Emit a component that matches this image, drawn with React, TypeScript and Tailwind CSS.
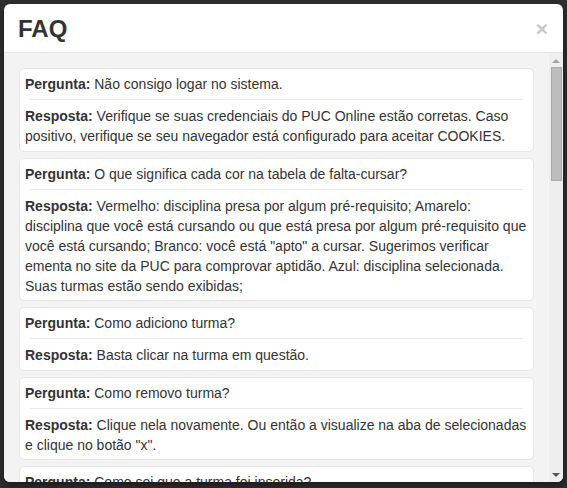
const faqs = [
  {
    q: 'Não consigo logar no sistema.',
    a: 'Verifique se suas credenciais do PUC Online estão corretas. Caso positivo, verifique se seu navegador está configurado para aceitar COOKIES.',
  },
  {
    q: 'O que significa cada cor na tabela de falta-cursar?',
    a: 'Vermelho: disciplina presa por algum pré-requisito; Amarelo: disciplina que você está cursando ou que está presa por algum pré-requisito que você está cursando; Branco: você está "apto" a cursar. Sugerimos verificar ementa no site da PUC para comprovar aptidão. Azul: disciplina selecionada. Suas turmas estão sendo exibidas;',
  },
  { q: 'Como adiciono turma?', a: 'Basta clicar na turma em questão.' },
  {
    q: 'Como removo turma?',
    a: 'Clique nela novamente. Ou então a visualize na aba de selecionadas e clique no botão "x".',
  },
  { q: 'Como sei que a turma foi inserida?', a: 'Ela aparecerá na grade de horários.' },
]

function FaqCard({ q, a }: { q: string; a: string }) {
  return (
    <div className="bg-white border border-[#e6e6e6] rounded-[5px] px-[5px] pt-[5px] pb-[4.5px]">
      <p className="leading-5">
        <b className="font-bold">Pergunta:</b> {q}
      </p>
      <hr className="mx-[5px] mt-[5px] mb-[6px] border-t border-[#eaeaea]" />
      <p className="leading-5">
        <b className="font-bold">Resposta:</b> {a}
      </p>
    </div>
  )
}

function Scrollbar() {
  return (
    <div className="w-[14px] bg-[#eeeeee] flex flex-col items-center">
      <div className="mt-[6px] w-0 h-0 border-x-[4px] border-x-transparent border-b-[4px] border-b-[#a3a3a3]" />
      <div className="mt-[4px] w-[11px] h-[114px] bg-[#bdbdbd] border border-[#a8a8a8]" />
      <div className="flex-1" />
      <div className="mb-[5px] w-0 h-0 border-x-[4px] border-x-transparent border-t-[4px] border-t-[#555]" />
    </div>
  )
}

export default function App() {
  return (
    <div
      className="h-[488px] w-[567px] bg-[#2f2f2f] pt-[4px] pl-[4px] overflow-hidden text-[14px] text-[#333]"
      style={{ fontFamily: '"Liberation Sans", Arial, sans-serif' }}
    >
      <div className="w-[559px] h-[478px] bg-white rounded-[6px] overflow-hidden flex flex-col shadow-[0_3px_9px_rgba(0,0,0,0.5)]">
        <div className="h-[49px] shrink-0 border-b border-[#e5e5e5] flex items-center justify-between pl-[14px] pr-[15px]">
          <h4 className="text-[24px] font-bold leading-none mt-[1px]">FAQ</h4>
          <span className="text-[21px] font-bold text-[#c8c8c8] leading-none">×</span>
        </div>
        <div className="flex-1 min-h-0 flex bg-[#f3f3f3]">
          <div className="flex-1 min-w-0 overflow-hidden pl-[15px] pr-[15px] pt-[15px] flex flex-col gap-[6px]">
            {faqs.map((f) => (
              <FaqCard key={f.q} q={f.q} a={f.a} />
            ))}
          </div>
          <Scrollbar />
        </div>
      </div>
    </div>
  )
}
